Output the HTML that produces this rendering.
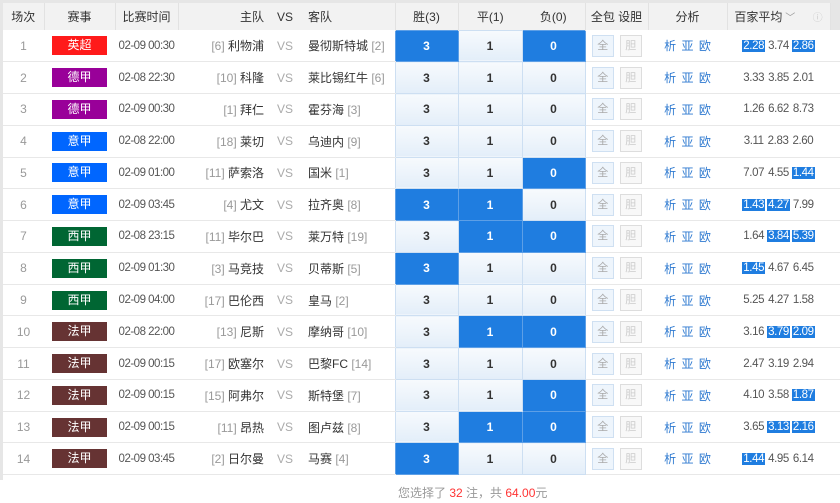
<!DOCTYPE html><html><head><meta charset="utf-8"><style>
*{margin:0;padding:0;box-sizing:border-box}
body{width:840px;height:503px;background:#fff;font-family:"Liberation Sans","Noto Sans CJK SC",sans-serif;font-size:12px;color:#555;position:relative;overflow:hidden}
.top{position:absolute;left:0;top:0;width:840px;height:3px;background:#e6e6e6}
.lb{position:absolute;left:0;top:0;width:3px;height:480px;background:#e6e6e6}
table{position:absolute;left:3px;top:3px;border-collapse:collapse;table-layout:fixed;width:837px}
th{height:27px;background:#f2f2f2;font-weight:normal;color:#333;border-right:1px solid #e2e2e2;font-size:12px}
td{height:31.77px;border-bottom:1px solid #e8e8e8;text-align:center;white-space:nowrap}
.t{font-size:11.5px;letter-spacing:-0.5px}
.b{display:inline-block;width:55px;height:19px;line-height:19px;color:#fff;font-size:12px}
.yc{background:#ff1a1a}.dj{background:#990099}.ij{background:#0066ff}.xj{background:#006633}.fj{background:#663333}
.h{text-align:right;padding-right:6px;color:#333;font-size:12px}
.a{text-align:left;padding-left:8px;color:#333;font-size:12px}
.g{color:#999}
.vs{color:#aaa;font-size:12px}
.p{background:linear-gradient(#f7fafd,#e3eef9);border:1px solid #cddff2;font-weight:bold;color:#333}
.p.s{background:#1f7de0;color:#fff;border-color:#5d9fe6}
.q{display:inline-block;width:22px;height:22px;line-height:20px;border:1px solid #dde;font-size:11px;color:#aaa;margin:0 3px}
.q1{background:#eef5fc;border-color:#cfe0f2}.q2{background:#f8f8f8;border-color:#ddd;color:#ccc}
.f{color:#2f7ad0;word-spacing:2px}
.o{font-size:11.5px;letter-spacing:-0.4px}
.o span{display:inline-block;padding:0 1px;margin:0 1px;color:#555}
.o span.s{background:#1f7de0;color:#fff}
.ft{position:absolute;top:484px;left:398px;color:#999;font-size:12px}
.ft b{color:#f33;font-weight:normal}
</style></head><body><div class="top"></div><div class="lb"></div>
<table>
<colgroup><col style="width:41px"><col style="width:71px"><col style="width:63px"><col style="width:92px"><col style="width:30px"><col style="width:95px"><col style="width:63px"><col style="width:64px"><col style="width:63px"><col style="width:63px"><col style="width:79px"><col style="width:103px"><col style="width:10px"></colgroup>
<tr><th>场次</th><th>赛事</th><th>比赛时间</th><th style="text-align:right;padding-right:6px;border-right:0">主队</th><th style="border-right:0">VS</th><th style="text-align:left;padding-left:8px">客队</th><th>胜(3)</th><th style="border-right:0">平(1)</th><th>负(0)</th><th>全包 设胆</th><th>分析</th><th>百家平均<span style="color:#999;font-size:10px"> ﹀</span> <span style="color:#ccc;font-size:10px;margin-left:14px">ⓘ</span></th><th style="background:#e6e6e6;border:0"></th></tr>
<tr><td class="g">1</td><td><span class="b yc">英超</span></td><td class="t">02-09 00:30</td><td class="h"><span class="g">[6]</span> 利物浦</td><td class="vs">VS</td><td class="a">曼彻斯特城 <span class="g">[2]</span></td><td class="p s">3</td><td class="p">1</td><td class="p s">0</td><td><span class="q q1">全</span><span class="q q2">胆</span></td><td class="f">析 亚 欧</td><td class="o"><span class="s">2.28</span><span>3.74</span><span class="s">2.86</span></td><td></td></tr>
<tr><td class="g">2</td><td><span class="b dj">德甲</span></td><td class="t">02-08 22:30</td><td class="h"><span class="g">[10]</span> 科隆</td><td class="vs">VS</td><td class="a">莱比锡红牛 <span class="g">[6]</span></td><td class="p">3</td><td class="p">1</td><td class="p">0</td><td><span class="q q1">全</span><span class="q q2">胆</span></td><td class="f">析 亚 欧</td><td class="o"><span>3.33</span><span>3.85</span><span>2.01</span></td><td></td></tr>
<tr><td class="g">3</td><td><span class="b dj">德甲</span></td><td class="t">02-09 00:30</td><td class="h"><span class="g">[1]</span> 拜仁</td><td class="vs">VS</td><td class="a">霍芬海 <span class="g">[3]</span></td><td class="p">3</td><td class="p">1</td><td class="p">0</td><td><span class="q q1">全</span><span class="q q2">胆</span></td><td class="f">析 亚 欧</td><td class="o"><span>1.26</span><span>6.62</span><span>8.73</span></td><td></td></tr>
<tr><td class="g">4</td><td><span class="b ij">意甲</span></td><td class="t">02-08 22:00</td><td class="h"><span class="g">[18]</span> 莱切</td><td class="vs">VS</td><td class="a">乌迪内 <span class="g">[9]</span></td><td class="p">3</td><td class="p">1</td><td class="p">0</td><td><span class="q q1">全</span><span class="q q2">胆</span></td><td class="f">析 亚 欧</td><td class="o"><span>3.11</span><span>2.83</span><span>2.60</span></td><td></td></tr>
<tr><td class="g">5</td><td><span class="b ij">意甲</span></td><td class="t">02-09 01:00</td><td class="h"><span class="g">[11]</span> 萨索洛</td><td class="vs">VS</td><td class="a">国米 <span class="g">[1]</span></td><td class="p">3</td><td class="p">1</td><td class="p s">0</td><td><span class="q q1">全</span><span class="q q2">胆</span></td><td class="f">析 亚 欧</td><td class="o"><span>7.07</span><span>4.55</span><span class="s">1.44</span></td><td></td></tr>
<tr><td class="g">6</td><td><span class="b ij">意甲</span></td><td class="t">02-09 03:45</td><td class="h"><span class="g">[4]</span> 尤文</td><td class="vs">VS</td><td class="a">拉齐奥 <span class="g">[8]</span></td><td class="p s">3</td><td class="p s">1</td><td class="p">0</td><td><span class="q q1">全</span><span class="q q2">胆</span></td><td class="f">析 亚 欧</td><td class="o"><span class="s">1.43</span><span class="s">4.27</span><span>7.99</span></td><td></td></tr>
<tr><td class="g">7</td><td><span class="b xj">西甲</span></td><td class="t">02-08 23:15</td><td class="h"><span class="g">[11]</span> 毕尔巴</td><td class="vs">VS</td><td class="a">莱万特 <span class="g">[19]</span></td><td class="p">3</td><td class="p s">1</td><td class="p s">0</td><td><span class="q q1">全</span><span class="q q2">胆</span></td><td class="f">析 亚 欧</td><td class="o"><span>1.64</span><span class="s">3.84</span><span class="s">5.39</span></td><td></td></tr>
<tr><td class="g">8</td><td><span class="b xj">西甲</span></td><td class="t">02-09 01:30</td><td class="h"><span class="g">[3]</span> 马竞技</td><td class="vs">VS</td><td class="a">贝蒂斯 <span class="g">[5]</span></td><td class="p s">3</td><td class="p">1</td><td class="p">0</td><td><span class="q q1">全</span><span class="q q2">胆</span></td><td class="f">析 亚 欧</td><td class="o"><span class="s">1.45</span><span>4.67</span><span>6.45</span></td><td></td></tr>
<tr><td class="g">9</td><td><span class="b xj">西甲</span></td><td class="t">02-09 04:00</td><td class="h"><span class="g">[17]</span> 巴伦西</td><td class="vs">VS</td><td class="a">皇马 <span class="g">[2]</span></td><td class="p">3</td><td class="p">1</td><td class="p">0</td><td><span class="q q1">全</span><span class="q q2">胆</span></td><td class="f">析 亚 欧</td><td class="o"><span>5.25</span><span>4.27</span><span>1.58</span></td><td></td></tr>
<tr><td class="g">10</td><td><span class="b fj">法甲</span></td><td class="t">02-08 22:00</td><td class="h"><span class="g">[13]</span> 尼斯</td><td class="vs">VS</td><td class="a">摩纳哥 <span class="g">[10]</span></td><td class="p">3</td><td class="p s">1</td><td class="p s">0</td><td><span class="q q1">全</span><span class="q q2">胆</span></td><td class="f">析 亚 欧</td><td class="o"><span>3.16</span><span class="s">3.79</span><span class="s">2.09</span></td><td></td></tr>
<tr><td class="g">11</td><td><span class="b fj">法甲</span></td><td class="t">02-09 00:15</td><td class="h"><span class="g">[17]</span> 欧塞尔</td><td class="vs">VS</td><td class="a">巴黎FC <span class="g">[14]</span></td><td class="p">3</td><td class="p">1</td><td class="p">0</td><td><span class="q q1">全</span><span class="q q2">胆</span></td><td class="f">析 亚 欧</td><td class="o"><span>2.47</span><span>3.19</span><span>2.94</span></td><td></td></tr>
<tr><td class="g">12</td><td><span class="b fj">法甲</span></td><td class="t">02-09 00:15</td><td class="h"><span class="g">[15]</span> 阿弗尔</td><td class="vs">VS</td><td class="a">斯特堡 <span class="g">[7]</span></td><td class="p">3</td><td class="p">1</td><td class="p s">0</td><td><span class="q q1">全</span><span class="q q2">胆</span></td><td class="f">析 亚 欧</td><td class="o"><span>4.10</span><span>3.58</span><span class="s">1.87</span></td><td></td></tr>
<tr><td class="g">13</td><td><span class="b fj">法甲</span></td><td class="t">02-09 00:15</td><td class="h"><span class="g">[11]</span> 昂热</td><td class="vs">VS</td><td class="a">图卢兹 <span class="g">[8]</span></td><td class="p">3</td><td class="p s">1</td><td class="p s">0</td><td><span class="q q1">全</span><span class="q q2">胆</span></td><td class="f">析 亚 欧</td><td class="o"><span>3.65</span><span class="s">3.13</span><span class="s">2.16</span></td><td></td></tr>
<tr><td class="g">14</td><td><span class="b fj">法甲</span></td><td class="t">02-09 03:45</td><td class="h"><span class="g">[2]</span> 日尔曼</td><td class="vs">VS</td><td class="a">马赛 <span class="g">[4]</span></td><td class="p s">3</td><td class="p">1</td><td class="p">0</td><td><span class="q q1">全</span><span class="q q2">胆</span></td><td class="f">析 亚 欧</td><td class="o"><span class="s">1.44</span><span>4.95</span><span>6.14</span></td><td></td></tr>
</table>
<div class="ft">您选择了 <b>32</b> 注，共 <b>64.00</b>元</div>
</body></html>
